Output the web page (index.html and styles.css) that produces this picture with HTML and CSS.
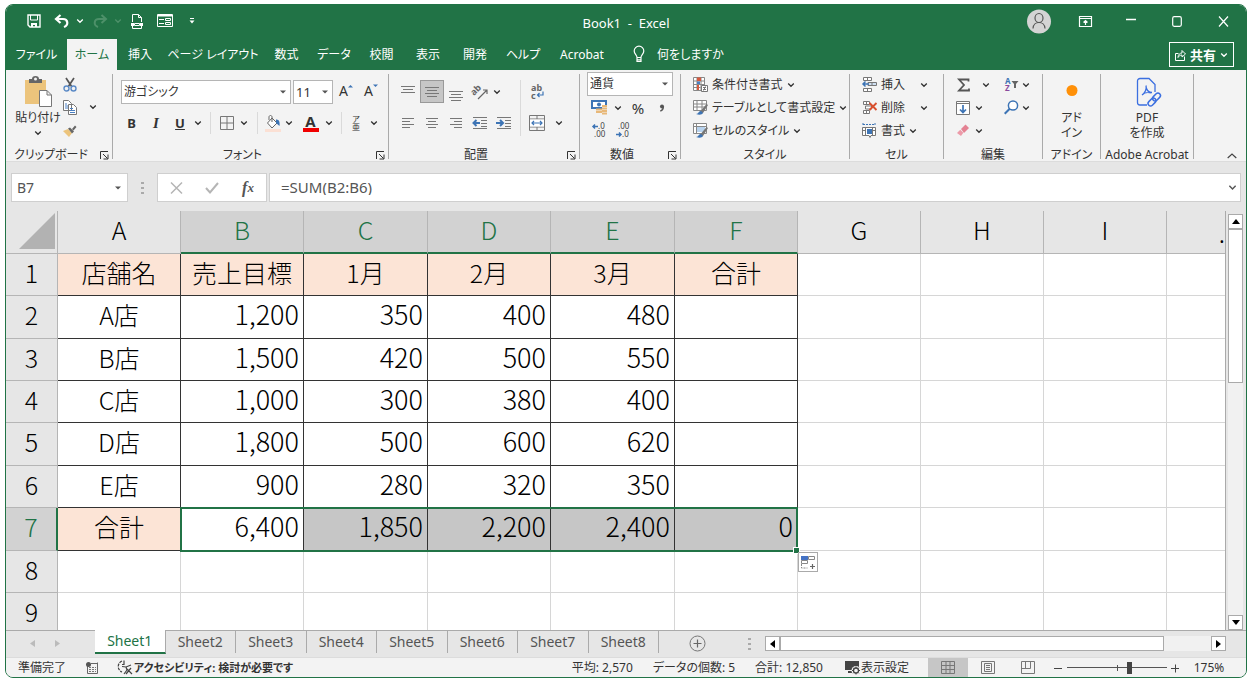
FILE: index.html
```html
<!DOCTYPE html>
<html lang="ja">
<head>
<meta charset="utf-8">
<title>Book1 - Excel</title>
<link rel="stylesheet" href="styles.css">
</head>
<body>
<svg class="defs" aria-hidden="true">
  <symbol id="chev" viewBox="0 0 8 8"><path d="M1.2 2.500 4 5.300 6.800 2.500" fill="none" stroke="currentColor" stroke-width="1.300"/></symbol>
  <symbol id="tri" viewBox="0 0 6 4"><path d="M0 .5h6L3 3.500z" fill="currentColor"/></symbol>
  <symbol id="launch" viewBox="0 0 10 10"><path d="M1.500 9V1.500H9M4 4l4.500 4.500M9 4.500V9H4.500" fill="none" stroke="currentColor"/></symbol>
</svg>
<div class="window">
  <header class="titlebar">
    <div class="quick">
      <button aria-label="保存"><svg width="14" height="14" viewBox="0 0 14 14"><path d="M1 1h12v12H3l-2-2z" fill="none" stroke="#fff" stroke-width="1.400"/><path d="M3.500 1v5h7V1" fill="none" stroke="#fff"/><path d="M4 9h6v4H8v-2H6v2H4z" fill="#fff"/></svg></button>
      <button aria-label="元に戻す"><svg width="16" height="14" viewBox="0 0 16 14"><path d="M6.500 1 2 5l4.500 4M2 5h7c5 0 6 6 1 8" fill="none" stroke="#fff" stroke-width="2.200"/></svg></button>
      <button aria-label="元に戻す一覧"><svg width="8" height="8"><use href="#chev"/></svg></button>
      <button aria-label="やり直し" class="dim"><svg width="16" height="14" viewBox="0 0 16 14"><path d="M9.500 1 14 5 9.500 9M14 5H7C2 5 1 11 6 13" fill="none" stroke="currentColor" stroke-width="2"/></svg></button>
      <button aria-label="やり直し一覧" class="dim"><svg width="8" height="8"><use href="#chev"/></svg></button>
      <button aria-label="印刷プレビュー"><svg width="12" height="15" viewBox="0 0 12 15"><path d="M1.500 8V.5h6l3 3V8M7.500.5v3h3M1.500 12v2.500h9V12" fill="none" stroke="#fff"/><path d="M0 9h3v3H0zM9 9h3v3H9z" fill="#fff"/><path d="M3.500 9.500h5v2h-5z" fill="none" stroke="#fff"/></svg></button>
      <button aria-label="フォーム"><svg width="16" height="14" viewBox="0 0 16 14"><path d="M.5.5h15v12H.5z" fill="none" stroke="#fff"/><path d="M1 1.500h14" stroke="#fff" stroke-width="2"/><path d="M2 5.500h5M2 9.500h5M8.500 4.500h5v2h-5zM8.500 8.500h5v2h-5z" fill="none" stroke="#fff"/></svg></button>
      <button aria-label="クイック アクセスのカスタマイズ"><svg width="6" height="6" viewBox="0 0 6 6"><path d="M1 .5h4" stroke="#fff"/><path d="M.5 2.500h5L3 5.500z" fill="#fff"/></svg></button>
    </div>
    <h1>Book1&nbsp; -&nbsp; Excel</h1>
    <div class="wincontrols">
      <button aria-label="アカウント"><svg width="24" height="25" viewBox="0 0 24 25"><circle cx="12" cy="12.500" r="12" fill="#d4d4d4"/><ellipse cx="12" cy="9" rx="4" ry="4.500" fill="none" stroke="#555" stroke-width="1.200"/><path d="M6 19.500c.5-8 11.500-8 12 0" fill="none" stroke="#555" stroke-width="1.200"/></svg></button>
      <button aria-label="リボンの表示オプション"><svg width="13" height="11" viewBox="0 0 13 11"><path d="M.5.5h12v10H.5zM.5 2.500h12M6.500 9V4.500M4.500 6.500l2-2 2 2" fill="none" stroke="#fff" stroke-width="1.200"/></svg></button>
      <button aria-label="最小化"><svg width="10" height="10" viewBox="0 0 10 10"><path d="M0 3.500h10" stroke="#fff" stroke-width="1.300"/></svg></button>
      <button aria-label="最大化"><svg width="10" height="11" viewBox="0 0 10 11"><rect x=".7" y=".7" width="8.600" height="9.600" rx="1.500" fill="none" stroke="#fff" stroke-width="1.200"/></svg></button>
      <button aria-label="閉じる"><svg width="11" height="11" viewBox="0 0 11 11"><path d="m1 .5 9 10M10 .5l-9 10" stroke="#fff" stroke-width="1.200"/></svg></button>
    </div>
  </header>

  <nav class="menubar">
    <div class="menus">
      <button>ファイル</button><button class="current">ホーム</button><button>挿入</button><button>ページ レイアウト</button><button>数式</button><button>データ</button><button>校閲</button><button>表示</button><button>開発</button><button>ヘルプ</button><button>Acrobat</button>
    </div>
    <button class="tellme"><svg width="12" height="17" viewBox="0 0 12 17"><path d="M4 11.500C4 9 1.200 8.300 1.200 5a4.800 4.800 0 0 1 9.600 0C10.800 8.300 8 9 8 11.500zM4 12v3.500h4V12M4 13.800h4" fill="none" stroke="#fff" stroke-width="1.200"/></svg>何をしますか</button>
    <button class="share"><svg width="11" height="12" viewBox="0 0 11 12"><path d="M3.500 4.500h-3v7h9v-4M3 8.500C3 5.500 5 4 7 4V1.500L10.500 5 7 8V6C5 6 4 7 3 8.500z" fill="none" stroke="#fff"/></svg>共有<svg width="8" height="8"><use href="#chev"/></svg></button>
  </nav>

  <section class="ribbon">
    <div class="group clipboard">
      <div class="body">
        <button class="big"><svg width="28" height="31" viewBox="0 0 28 31"><path d="M1 4h21v24H1z" fill="#ecc47c"/><path d="M5 3h3a3.500 3 0 0 1 7 0h3v4H5z" fill="#666"/><circle cx="11.500" cy="3" r="1.500" fill="#f3f3f3"/><path d="M15.500 14.500h7.500l4.500 4.500v11.500h-12zM23 14.500V19h4.500" fill="#fff" stroke="#777"/></svg><span>貼り付け</span><svg width="8" height="8"><use href="#chev"/></svg></button>
        <div class="stack">
          <button aria-label="切り取り"><svg width="14" height="15" viewBox="0 0 14 15"><path d="M3 1l6 9M11 1 5 10" stroke="#555" stroke-width="1.700"/><circle cx="3.500" cy="11.500" r="2.500" fill="none" stroke="#5b8ac6" stroke-width="1.400"/><circle cx="10.500" cy="11.500" r="2.500" fill="none" stroke="#5b8ac6" stroke-width="1.400"/></svg></button>
          <button aria-label="コピー"><svg width="14" height="15" viewBox="0 0 14 15"><path d="M.5.5h5l3 3v7h-8zM5.500 4.500h5l3 3v7h-8z" fill="#fff" stroke="#777"/><path d="M2 4h2M2 6h3M2 8h3M7 8.500h3M7 10.500h5M7 12.500h5" stroke="#4a7fc1"/></svg></button>
          <button aria-label="書式のコピー"><svg width="14" height="12" viewBox="0 0 14 12"><path d="m0 6 5-2 4 4-3 4z" fill="#ecc47c"/><path d="m5 3.500 2-1 4 4-2 2zM9 4l3-3.500L13.500 2l-3 3.500z" fill="#666"/></svg></button>
        </div>
        <button class="mid" aria-label="コピー一覧"><svg width="8" height="8"><use href="#chev"/></svg></button>
      </div>
      <footer><span>クリップボード</span><button aria-label="クリップボード設定"><svg width="10" height="10"><use href="#launch"/></svg></button></footer>
    </div>

    <div class="group font">
      <div class="body rows">
        <div class="row fontpick">
          <span class="combo"><select aria-label="フォント"><option>游ゴシック</option></select><svg width="6" height="4"><use href="#tri"/></svg></span>
          <span class="combo"><select aria-label="フォント サイズ" class="size"><option>11</option></select><svg width="6" height="4"><use href="#tri"/></svg></span>
          <button class="grow" aria-label="フォント サイズの拡大">A<svg width="5" height="4" viewBox="0 0 5 4"><path d="M0 3.500 2.500 1 5 3.500z" fill="#3d74b5"/></svg></button>
          <button class="grow" aria-label="フォント サイズの縮小">A<svg width="5" height="4" viewBox="0 0 5 4"><path d="M0 .5h5L2.500 3z" fill="#3d74b5"/></svg></button>
        </div>
        <div class="row fontstyle">
          <button class="b">B</button><button class="i">I</button><button class="u">U</button>
          <button aria-label="下線一覧"><svg width="8" height="8"><use href="#chev"/></svg></button><i class="sep"></i>
          <button aria-label="罫線"><svg width="14" height="14" viewBox="0 0 14 14"><path d="M.5.5h13v13H.5zM7 .5v13M.5 7h13" fill="none" stroke="#777"/></svg></button>
          <button aria-label="罫線一覧"><svg width="8" height="8"><use href="#chev"/></svg></button><i class="sep"></i>
          <button aria-label="塗りつぶし"><svg width="16" height="17" viewBox="0 0 16 17"><path d="m7 3 5 5-5 5-4.500-5zM7 7V2c0-2-3-2-3 0v3" fill="#fff" stroke="#666"/><path d="M11 4.500c3 0 4 2 3.500 6.500L11 8z" fill="#3d74b5"/><path d="M0 14h16v3H0z" fill="#fbe0d4"/></svg></button>
          <button aria-label="塗りつぶし一覧"><svg width="8" height="8"><use href="#chev"/></svg></button>
          <button class="fontcolor" aria-label="フォントの色">A</button>
          <button aria-label="フォントの色一覧"><svg width="8" height="8"><use href="#chev"/></svg></button><i class="sep"></i>
          <button class="ruby" aria-label="ふりがな"><span>ア</span><span>亜</span></button>
          <button aria-label="ふりがな一覧"><svg width="8" height="8"><use href="#chev"/></svg></button>
        </div>
      </div>
      <footer><span>フォント</span><button aria-label="フォント設定"><svg width="10" height="10"><use href="#launch"/></svg></button></footer>
    </div>

    <div class="group align">
      <div class="body">
        <div class="rows">
          <div class="row aligntop">
            <button aria-label="上揃え"><svg width="16" height="14" viewBox="0 0 16 14"><path d="M1 1.500h14M3 4.500h10M1 7.500h14" stroke="#777"/></svg></button>
            <button aria-label="上下中央揃え" class="on"><svg width="16" height="14" viewBox="0 0 16 14"><path d="M1 2.500h14M3 5.500h10M1 8.500h14M3 11.500h10" stroke="#777"/></svg></button>
            <button aria-label="下揃え"><svg width="16" height="14" viewBox="0 0 16 14"><path d="M1 6.500h14M3 9.500h10M1 12.500h14M3 15.500h10" stroke="#777"/></svg></button>
            <button aria-label="方向" class="orient"><svg width="16" height="14" viewBox="0 0 16 14"><text x="0" y="9" transform="rotate(-45 3 9)" class="tinyab">ab</text><path d="M5 14 14 5M10 5h4v4" fill="none" stroke="#666" stroke-width="1.200"/></svg></button>
            <button aria-label="方向一覧"><svg width="8" height="8"><use href="#chev"/></svg></button>
          </div>
          <div class="row alignbottom">
            <button aria-label="左揃え"><svg width="14" height="12" viewBox="0 0 14 12"><path d="M1 1.500h12M1 4.500h8M1 7.500h12M1 10.500h8" stroke="#777"/></svg></button>
            <button aria-label="中央揃え"><svg width="14" height="12" viewBox="0 0 14 12"><path d="M1 1.500h12M3 4.500h8M1 7.500h12M3 10.500h8" stroke="#777"/></svg></button>
            <button aria-label="右揃え"><svg width="14" height="12" viewBox="0 0 14 12"><path d="M1 1.500h12M5 4.500h8M1 7.500h12M5 10.500h8" stroke="#777"/></svg></button>
            <button aria-label="インデントを減らす"><svg width="16" height="14" viewBox="0 0 16 14"><path d="M1 1.500h14M9 4.500h6M9 7.500h6M9 10.500h6M1 12.500h14" stroke="#777"/><path d="M8 7H2M4.500 4l-3 3 3 3" fill="none" stroke="#3d74b5" stroke-width="2"/></svg></button>
            <button aria-label="インデントを増やす"><svg width="16" height="14" viewBox="0 0 16 14"><path d="M1 1.500h14M9 4.500h6M9 7.500h6M9 10.500h6M1 12.500h14" stroke="#777"/><path d="M0 7h6.500M4 4l3 3-3 3" fill="none" stroke="#3d74b5" stroke-width="2"/></svg></button>
          </div>
        </div>
        <i class="sep tall"></i>
        <div class="rows">
          <div class="row wrap"><button aria-label="折り返して全体を表示する"><svg width="16" height="16" viewBox="0 0 16 16"><text x="2" y="7" class="tinyab">ab</text><text x="2" y="15" class="tinyab">c</text><path d="M14 7.500v3.500H8.500M10.500 9l-2 2 2 2" fill="none" stroke="#3d74b5" stroke-width="1.200"/></svg></button></div>
          <div class="row wrap"><button aria-label="セルを結合して中央揃え"><svg width="16" height="16" viewBox="0 0 16 16"><path d="M.5.5h15v15H.5zM.5 4h15M.5 12h15M8 .5V4M8 12v3.500" fill="none" stroke="#777"/><path d="M1 4.500h14v7H1z" fill="#fff"/><path d="M3 8h10M5 6 3 8l2 2M11 6l2 2-2 2" fill="none" stroke="#3d74b5" stroke-width="1.200"/></svg></button><button aria-label="結合一覧"><svg width="8" height="8"><use href="#chev"/></svg></button></div>
        </div>
      </div>
      <footer><span>配置</span><button aria-label="配置設定"><svg width="10" height="10"><use href="#launch"/></svg></button></footer>
    </div>

    <div class="group number">
      <div class="body rows">
        <span class="combo"><select aria-label="表示形式"><option>通貨</option></select><svg width="6" height="4"><use href="#tri"/></svg></span>
        <div class="row money">
          <button aria-label="通貨表示形式"><svg width="17" height="16" viewBox="0 0 17 16"><path d="M1 1h14v7H1z" fill="#fff" stroke="#3d74b5" stroke-width="2"/><circle cx="8" cy="4.500" r="2" fill="#3d74b5"/><path d="M5 9h7v5H5zM11 5h5v10h-5z" fill="#f3f3f3"/><path d="M5 9.500h6M5 12h6M11 6h5M11 8.500h5M11 11h5M11 13.500h5" stroke="#e8b878" stroke-width="1.800"/></svg></button>
          <button aria-label="通貨一覧"><svg width="8" height="8"><use href="#chev"/></svg></button>
          <button class="pct">%</button><button class="comma" aria-label="桁区切りスタイル"><svg width="6" height="8" viewBox="0 0 6 8"><circle cx="3" cy="2.500" r="2" fill="#555"/><path d="M4.300 2.500c0 2.500-1 4-3 4.500" fill="none" stroke="#555" stroke-width="1.500"/></svg></button>
        </div>
        <div class="row decimals">
          <button aria-label="小数点以下の表示桁数を増やす"><svg width="14" height="15" viewBox="0 0 14 15"><text x="6" y="6" class="tiny">.0</text><text x="2" y="14" class="tiny">.00</text><path d="M6 3.500H1M3 1.500l-2 2 2 2" fill="none" stroke="#3d74b5" stroke-width="1.500"/></svg></button>
          <button aria-label="小数点以下の表示桁数を減らす"><svg width="14" height="15" viewBox="0 0 14 15"><text x="2" y="6" class="tiny">.00</text><text x="6" y="14" class="tiny">.0</text><path d="M0 11.500h5M3 9.500l2 2-2 2" fill="none" stroke="#3d74b5" stroke-width="1.500"/></svg></button>
        </div>
      </div>
      <footer><span>数値</span><button aria-label="表示形式設定"><svg width="10" height="10"><use href="#launch"/></svg></button></footer>
    </div>

    <div class="group styles">
      <div class="body stack">
        <button><svg width="15" height="15" viewBox="0 0 15 15"><path d="M.5.5h11v13H.5zM4 .5v13M8 .5v13M.5 4h11M.5 7.500h11M.5 10.500h7" fill="#fff" stroke="#888"/><path d="M4 .5h4V4H4z" fill="#d65a3f"/><path d="M4 4.500h3v2.500H4z" fill="#4a7fc1"/><path d="M4 8h2v5H4z" fill="#d65a3f"/><path d="M8.500 8.500h6v6h-6zM10 10.500h3M10 12.500h3M12.500 9.500l-2 4" fill="#fff" stroke="#777"/></svg>条件付き書式<svg width="8" height="8"><use href="#chev"/></svg></button>
        <button><svg width="15" height="15" viewBox="0 0 15 15"><path d="M.5.5h13v10H.5zM.5 4h13M.5 7h13M4 .5v10M9 .5v10" fill="#fff" stroke="#888"/><path d="M6 13 13.500 4l1.500 1-5 8z" fill="#777"/><path d="M3 14c3 0 2-3 5-3l2 2c-1 2-4 2-7 1z" fill="#3d74b5"/></svg>テーブルとして書式設定<svg width="8" height="8"><use href="#chev"/></svg></button>
        <button><svg width="15" height="15" viewBox="0 0 15 15"><path d="M.5.5h13v10H.5zM.5 3.500h13M3.500.5v10" fill="#fff" stroke="#888"/><path d="M4 4h8v5H4z" fill="#b8d3ee"/><path d="M6 13 13.500 4l1.500 1-5 8z" fill="#777"/><path d="M3 14c3 0 2-3 5-3l2 2c-1 2-4 2-7 1z" fill="#3d74b5"/></svg>セルのスタイル<svg width="8" height="8"><use href="#chev"/></svg></button>
      </div>
      <footer><span>スタイル</span></footer>
    </div>

    <div class="group cells">
      <div class="body stack">
        <button class="spread"><svg width="15" height="15" viewBox="0 0 15 15"><path d="M1.500.5h8v3h-8zM5.500.5v3M1.500 11.500h8v3h-8zM5.500 11.500v3" fill="#fff" stroke="#777"/><path d="M6 5.500h8.500v3H6zM10 5.500v3" fill="#cfe0f2" stroke="#777"/><path d="M7 7H1M3.500 4.500 1 7l2.500 2.500" fill="none" stroke="#3d74b5" stroke-width="1.500"/></svg><span>挿入</span><svg width="8" height="8"><use href="#chev"/></svg></button>
        <button class="spread"><svg width="15" height="15" viewBox="0 0 15 15"><path d="M1.500 1.500h6v3h-6zM3.500 6h6v3h-6zM1.500 10.500h6v3h-6zM4.500 10.500v3M4.500 1.500v3" fill="#fff" stroke="#777"/><path d="m7.500 3 7 7M14.500 3l-7 7" stroke="#d9502e" stroke-width="1.900"/></svg><span>削除</span><svg width="8" height="8"><use href="#chev"/></svg></button>
        <button><svg width="15" height="15" viewBox="0 0 15 15"><path d="M.5 4.500h13v8H9l-1 2-1-2H.5zM3.500 4.500v8M10.500 4.500v8M.5 7.500h3M10.500 7.500h3" fill="#fff" stroke="#777"/><path d="M5 6h5v5H5z" fill="#3d74b5"/><path d="M1 1.500h12M1 0v3M13 0v3" stroke="#3d74b5" stroke-dasharray="2 1"/></svg>書式<svg width="8" height="8"><use href="#chev"/></svg></button>
      </div>
      <footer><span>セル</span></footer>
    </div>

    <div class="group edit">
      <div class="body editgrid">
        <button aria-label="合計"><svg width="13" height="14" viewBox="0 0 13 14"><path d="M11.500 3.500V1.500H2L7 7l-5 5.500h10v-2" fill="none" stroke="#555" stroke-width="1.800"/></svg></button><button class="far" aria-label="合計一覧"><svg width="8" height="8"><use href="#chev"/></svg></button>
        <button class="right" aria-label="並べ替えとフィルター"><svg width="14" height="15" viewBox="0 0 14 15"><text x="0" y="7" class="az blue">A</text><text x="0" y="14" class="az purple">Z</text><path d="M6.500 4h7L11 7v4H9V7z" fill="#666"/></svg></button><button aria-label="並べ替え一覧"><svg width="8" height="8"><use href="#chev"/></svg></button>
        <button aria-label="フィル"><svg width="14" height="14" viewBox="0 0 14 14"><path d="M.5.5h13v13H.5z" fill="#fff" stroke="#777"/><path d="M.5 2.500h13" stroke="#777"/><path d="M7 4v7M4 8.500l3 3 3-3" fill="none" stroke="#3d74b5" stroke-width="1.700"/></svg></button><button aria-label="フィル一覧"><svg width="8" height="8"><use href="#chev"/></svg></button>
        <button class="right" aria-label="検索と選択"><svg width="15" height="15" viewBox="0 0 15 15"><circle cx="9" cy="5.500" r="4.600" fill="#fff" stroke="#3d74b5" stroke-width="1.500"/><path d="m5.700 8.800-5 5" stroke="#3d74b5" stroke-width="2"/></svg></button><button aria-label="検索一覧"><svg width="8" height="8"><use href="#chev"/></svg></button>
        <button aria-label="クリア"><svg width="14" height="13" viewBox="0 0 14 13"><path d="m5 5 4.500-4.500L13 4 8 9z" fill="#e48293"/><path d="m4.300 5.700 3 3L5 12 1 9z" fill="#ec9aa8"/></svg></button><button aria-label="クリア一覧"><svg width="8" height="8"><use href="#chev"/></svg></button>
      </div>
      <footer><span>編集</span></footer>
    </div>

    <div class="group addin">
      <div class="body"><button class="big"><svg width="28" height="31" viewBox="0 0 28 31"><circle cx="14" cy="14.500" r="5.500" fill="#ff9008"/></svg><span>アド<br>イン</span></button></div>
      <footer><span>アドイン</span></footer>
    </div>

    <div class="group acrobat">
      <div class="body"><button class="big"><svg width="28" height="31" viewBox="0 0 28 31"><path d="M14 29H7a2.500 2.500 0 0 1-2.500-2.500V5A2.500 2.500 0 0 1 7 2.500h9l6 6V16M9 19c3-2 5-6 4-9.500M13 11c1 4 3 5.500 6 5.500M9 19c2-2 6-3 9-2" fill="none" stroke="#3b6fe0" stroke-width="1.300"/><g fill="none" stroke="#3b6fe0" stroke-width="1.500"><rect x="19" y="18.500" width="9" height="5" rx="2.500" transform="rotate(-45 23.500 21)"/><rect x="14.500" y="23.500" width="9" height="5" rx="2.500" transform="rotate(-45 19 26)"/></g></svg><span>PDF<br>を作成</span></button></div>
      <footer><span>Adobe Acrobat</span></footer>
    </div>
    <button class="collapse" aria-label="リボンを折りたたむ"><svg width="10" height="6" viewBox="0 0 10 6"><path d="m.7 5 4.300-4 4.300 4" fill="none" stroke="#444" stroke-width="1.200"/></svg></button>
  </section>

  <section class="formulabar">
    <span class="combo namebox"><input aria-label="名前ボックス" value="B7"><svg width="6" height="4"><use href="#tri"/></svg></span>
    <i class="dots"></i>
    <div class="fxbuttons">
      <button aria-label="キャンセル"><svg width="13" height="12" viewBox="0 0 13 12"><path d="m1 .5 11 11M12 .5l-11 11" stroke="#b5b5b5" stroke-width="1.500"/></svg></button>
      <button aria-label="入力"><svg width="14" height="12" viewBox="0 0 14 12"><path d="m1 6 4 4.500L13 1" fill="none" stroke="#b5b5b5" stroke-width="2"/></svg></button>
      <button class="fx" aria-label="関数の挿入">f<small>x</small></button>
    </div>
    <div class="formula"><input aria-label="数式バー" value="=SUM(B2:B6)"><svg width="9" height="9"><use href="#chev"/></svg></div>
  </section>

  <main class="sheetarea">
    <div class="sheet">
      <table>
        <colgroup><col class="rh"><col class="w"><col class="w"><col class="wx"><col class="w"><col class="wx"><col class="w"><col class="w"><col class="w"><col class="w"><col class="rest"></colgroup>
        <thead><tr><th class="corner"><svg width="36" height="36" viewBox="0 0 36 36"><path d="M36 0v36H0z" fill="#b2b2b2"/></svg></th><th>A</th><th class="sel">B</th><th class="sel">C</th><th class="sel">D</th><th class="sel">E</th><th class="sel">F</th><th>G</th><th>H</th><th>I</th><th class="cut">.</th></tr></thead>
        <tbody>
          <tr class="head"><th>1</th><td>店舗名</td><td>売上目標</td><td>1月</td><td>2月</td><td>3月</td><td>合計</td><td></td><td></td><td></td><td></td></tr>
          <tr class="data tall"><th>2</th><td>A店</td><td>1,200</td><td>350</td><td>400</td><td>480</td><td></td><td></td><td></td><td></td><td></td></tr>
          <tr class="data"><th>3</th><td>B店</td><td>1,500</td><td>420</td><td>500</td><td>550</td><td></td><td></td><td></td><td></td><td></td></tr>
          <tr class="data"><th>4</th><td>C店</td><td>1,000</td><td>300</td><td>380</td><td>400</td><td></td><td></td><td></td><td></td><td></td></tr>
          <tr class="data tall"><th>5</th><td>D店</td><td>1,800</td><td>500</td><td>600</td><td>620</td><td></td><td></td><td></td><td></td><td></td></tr>
          <tr class="data"><th>6</th><td>E店</td><td>900</td><td>280</td><td>320</td><td>350</td><td></td><td></td><td></td><td></td><td></td></tr>
          <tr class="data total tall"><th>7</th><td>合計</td><td>6,400</td><td>1,850</td><td>2,200</td><td>2,400</td><td>0</td><td></td><td></td><td></td><td></td></tr>
          <tr><th>8</th><td></td><td></td><td></td><td></td><td></td><td></td><td></td><td></td><td></td><td></td></tr>
          <tr><th>9</th><td></td><td></td><td></td><td></td><td></td><td></td><td></td><td></td><td></td><td></td></tr>
        </tbody>
      </table>
      <div class="selection"><i></i></div>
      <button class="smarttag" aria-label="オートフィル オプション"><svg width="15" height="15" viewBox="0 0 15 15"><path d="M7.500 1.500h6v3h-6zM.5 5.500h6v3h-6z" fill="#fff" stroke="#888"/><path d="M0 1h7v4H0z" fill="#4472c4"/><path d="M.5 9v4h6" fill="none" stroke="#888" stroke-dasharray="2 1"/><path d="M11.500 9v5M9 11.500h5" stroke="#666" stroke-width="1.200"/></svg></button>
    </div>
    <div class="vscroll">
      <button aria-label="上へスクロール"><svg width="8" height="5" viewBox="0 0 8 5"><path d="M0 5 4 0l4 5z"/></svg></button>
      <div class="track"><div class="thumb"></div></div>
      <button aria-label="下へスクロール"><svg width="8" height="5" viewBox="0 0 8 5"><path d="M0 0h8L4 5z"/></svg></button>
    </div>
  </main>

  <section class="sheetbar">
    <div class="sheetnav"><button aria-label="前のシート"><svg width="5" height="7" viewBox="0 0 5 7"><path d="M5 0v7L0 3.500z" fill="#bbb"/></svg></button><button aria-label="次のシート"><svg width="5" height="7" viewBox="0 0 5 7"><path d="M0 0v7l5-3.500z" fill="#bbb"/></svg></button></div>
    <div class="sheettabs"><button class="active">Sheet1</button><button>Sheet2</button><button>Sheet3</button><button>Sheet4</button><button>Sheet5</button><button>Sheet6</button><button>Sheet7</button><button>Sheet8</button></div>
    <button class="add" aria-label="新しいシート"><svg width="17" height="17" viewBox="0 0 17 17"><path d="M8.500 4.500v8M4.500 8.500h8" stroke="#666" stroke-width="1.200"/><circle cx="8.500" cy="8.500" r="7.500" fill="none" stroke="#777"/></svg></button>
    <i class="dots"></i>
    <div class="hscroll">
      <button aria-label="左へスクロール"><svg width="5" height="8" viewBox="0 0 5 8"><path d="M5 0v8L0 4z"/></svg></button>
      <div class="track"><div class="thumb"></div></div>
      <button aria-label="右へスクロール"><svg width="5" height="8" viewBox="0 0 5 8"><path d="M0 0v8l5-4z"/></svg></button>
    </div>
  </section>

  <footer class="status">
    <span class="ready">準備完了</span>
    <svg class="macro" width="13" height="12" viewBox="0 0 13 12"><path d="M1.500 3.500v8h10V.5M5 1.500h7" fill="none" stroke="#666"/><path d="M3 5.500h7M3 7.500h7M3 9.500h7" stroke="#777" stroke-dasharray="2 1"/><circle cx="2.500" cy="2.500" r="2.500" fill="#555"/></svg>
    <button class="access"><svg width="17" height="15" viewBox="0 0 17 15"><path d="M5 1C0 3 0 10 5 12" fill="none" stroke="#444" stroke-width="1.200" stroke-dasharray="3 1"/><path d="M7 .5v4H5M5 6.500l4 .5 5-2M9 7l1 3-3 4M10 9l5 5M14 8l-5 6" fill="none" stroke="#444" stroke-width="1.200"/></svg>アクセシビリティ: 検討が必要です</button>
    <div class="stats"><span>平均: 2,570</span><span>データの個数: 5</span><span>合計: 12,850</span></div>
    <button class="display"><svg width="16" height="14" viewBox="0 0 16 14"><path d="M0 0h14v9H0zM3 10h5v2H3z" fill="#444"/><circle cx="11" cy="9.500" r="4.500" fill="#f3f3f3"/><circle cx="11" cy="9.500" r="2.500" fill="none" stroke="#444" stroke-width="1.300"/><path d="M11 5.500V7M11 12v1.500M7 9.500h1.500M13.500 9.500H15M8.200 6.700l1 1M13.800 6.700l-1 1M8.200 12.300l1-1M13.800 12.300l-1-1" stroke="#444"/></svg>表示設定</button>
    <div class="views">
      <button class="on" aria-label="標準"><svg width="14" height="13" viewBox="0 0 14 13"><path d="M.5.5h13v12H.5zM5 .5v12M9 .5v12M.5 4.500h13M.5 8.500h13" fill="none" stroke="#777"/></svg></button>
      <button aria-label="ページ レイアウト"><svg width="14" height="13" viewBox="0 0 14 13"><path d="M.5.5h13v12H.5zM3.500 2.500h7v8h-7zM5 4.500h4M5 6.500h4M5 8.500h4" fill="none" stroke="#777"/></svg></button>
      <button aria-label="改ページ プレビュー"><svg width="14" height="13" viewBox="0 0 14 13"><path d="M.5.5h13v12H.5zM4.500.5v7M9.500.5v7M.5 7.500h9" fill="none" stroke="#777"/></svg></button>
    </div>
    <div class="zoom">
      <button aria-label="縮小"><svg width="8" height="8" viewBox="0 0 8 8"><path d="M0 4.500h8" stroke="#444"/></svg></button>
      <input type="range" aria-label="ズーム" min="0" max="100" value="63">
      <button aria-label="拡大"><svg width="8" height="8" viewBox="0 0 8 8"><path d="M0 4.500h8M4.500.5v8" stroke="#444"/></svg></button>
      <button class="level">175%</button>
    </div>
  </footer>
</div>
</body>
</html>
```
FILE: styles.css
```css
* { box-sizing: border-box; }
html, body { height: 100%; margin: 0; }
body {
  padding: 4px 6px 7px 5px;
  background: #fff;
  color: #333;
  font: 12px/16px "Noto Sans", "Noto Sans CJK JP", sans-serif;
  font-feature-settings: "palt";
}
.defs { display: none; }
button {
  display: flex; align-items: center; justify-content: center;
  margin: 0; padding: 0; border: 0; background: none;
  color: inherit; font: inherit; font-feature-settings: inherit; white-space: nowrap;
}
input, select { font: inherit; color: inherit; min-width: 0; }
svg { display: block; flex: none; overflow: visible; }
.window {
  display: flex; flex-direction: column; height: 100%;
  border: 1px solid #217346; border-radius: 8px; overflow: hidden;
  background: #e6e6e6;
}

/* title bar */
.titlebar { display: grid; grid-template-columns: 1fr auto 1fr; align-items: center; height: 34px; background: #217346; color: #fff; flex: none; }
.titlebar h1 { margin: 2px 0 0; font-size: 13px; font-weight: 400; }
.quick { display: grid; grid-template-columns: 28px 28px 8px 32px 4px 34px 22px 32px; margin-left: 14px; height: 26px; align-self: start; margin-top: 3px; }
.quick .dim { color: #4d9069; }
.wincontrols { display: grid; grid-template-columns: repeat(5, 46px); justify-content: end; height: 34px; padding-bottom: 2px; }

/* menu row */
.menubar { display: flex; height: 31px; background: #217346; color: #fff; flex: none; }
.menus { display: grid; grid-template-columns: 61px 50px 46px 100px 47px 48px 47px 46px 48px 48px 70px; }
.menus .current { background: #f3f3f3; color: #217346; }
.tellme { gap: 12px; margin-left: 16px; }
.share { align-self: flex-start; margin: 3px 12px 0 auto; width: 65px; height: 25px; gap: 4px; border: 1px solid #fff; font-weight: 700; font-size: 13px; }

/* ribbon */
.ribbon { display: flex; height: 92px; padding: 4px 0 2px; background: #f3f3f3; border-bottom: 1px solid #dcdcdc; flex: none; }
.group { display: flex; flex-direction: column; flex: none; border-right: 1px solid #aaa; }
.group .body { display: flex; flex: 1; }
.group footer { display: flex; height: 14px; padding-top: 5px; align-items: center; white-space: nowrap; }
.group footer span { flex: 1; text-align: center; }
.group footer button { width: 16px; height: 9px; }
.group .rows { display: flex; flex-direction: column; }
.row { display: grid; }
.stack, .group .body.stack { display: flex; flex-direction: column; margin-top: -1px; }
.stack button { height: 23px; gap: 4px; justify-content: flex-start; }
.big { flex-direction: column; justify-content: flex-start; padding-top: 2px; }
.big span { line-height: 15px; margin-top: 3px; text-align: center; }
.combo { display: grid; align-items: center; background: #fff; border: 1px solid #b5b5b5; }
.combo > * { grid-area: 1 / 1; }
.combo > svg { justify-self: end; margin-right: 4px; color: #555; pointer-events: none; }
.combo select, .combo input { width: 100%; height: 100%; padding: 0 2px; border: 0; background: none; appearance: none; outline: 0; }
.sep { width: 1px; height: 22px; background: #dadada; justify-self: center; align-self: center; }
.sep.tall { height: 56px; margin: 6px 4px 0; align-self: flex-start; }

.clipboard { width: 107px; }
.clipboard .big { width: 44px; margin-left: 10px; }
.clipboard .big > svg:last-child { margin-top: 4px; }
.clipboard .stack { width: 24px; padding-left: 3px; }
.clipboard .mid { width: 18px; height: 66px; }

.font { width: 276px; }
.font .body { padding: 6px 0 0 8px; gap: 6px; }
.fontpick { grid-template-columns: 170px 40px 22px 24px; column-gap: 2px; height: 24px; }
.combo .size { font-size: 13px; }
.grow { align-items: flex-start; font-size: 14px; line-height: 22px; }
.grow svg { margin-top: 4px; }
.fontstyle { grid-template-columns: 21px 28px 20px 16px 9px 23px 12px 15px 15px 18px 25px 11px 15px 14px 22px; height: 26px; align-items: center; }
.b, .u { font-weight: 700; font-size: 13px; }
.i { font: italic 700 15px/16px "Liberation Serif", serif; }
.u { text-decoration: underline; }
.fontcolor { justify-self: center; width: 16px; height: 17px; border-bottom: 4px solid #f00000; font-size: 15px; font-weight: 700; }
.ruby { flex-direction: column; font-size: 8px; line-height: 8px; }

.align { width: 191px; }
.align .body > .rows { padding-top: 6px; gap: 8px; }
.aligntop { grid-template-columns: 24px 24px 24px 25px 8px; height: 23px; padding-left: 7px; }
.aligntop .on { background: #c6c6c6; border: 1px solid #999; }
.alignbottom { grid-template-columns: repeat(5, 24px); height: 23px; padding-left: 7px; }
.wrap { grid-template-columns: 24px 20px; height: 23px; }
.tinyab { font: 700 9px "Noto Sans", sans-serif; fill: #666; }
.tiny { font: 8px "Noto Sans", sans-serif; fill: #444; }

.number { width: 101px; }
.number .body { padding-left: 7px; margin-top: -2px; }
.number .combo { height: 24px; width: 86px; }
.money { grid-template-columns: 24px 14px 26px 22px; height: 23px; }
.pct { font-size: 15px; }
.decimals { grid-template-columns: 24px 24px; height: 23px; }

.styles { width: 169px; }
.styles .body { padding-left: 12px; }
.cells { width: 94px; }
.cells .body { padding-left: 12px; }
.spread span { width: 35px; text-align: left; }
.edit { width: 99px; }
.group .editgrid { display: grid; grid-template-columns: 18px 14px 33px 14px; grid-template-rows: repeat(3, 23px); padding-left: 10px; margin-top: -1px; }
.editgrid .far { margin-right: -14px; }
.editgrid .right { justify-self: end; }
.az { font: 700 8px "Noto Sans", sans-serif; }
.blue { fill: #3d74b5; }
.purple { fill: #8a4a9e; }
.addin { width: 58px; }
.addin .body, .acrobat .body { justify-content: center; }
.acrobat { width: 93px; }
.collapse { margin: 0 9px 0 auto; align-self: flex-end; height: 6px; }

/* formula bar */
.formulabar { display: flex; height: 49px; padding: 11px 5px 9px; flex: none; align-items: stretch; color: #555; }
.formulabar > * { height: 29px; }
.namebox { width: 117px; border-color: #cfcfcf; }
.namebox input { padding-left: 5px; font-size: 14px; }
.namebox > svg { margin-right: 6px; }
.dots { width: 3px; height: 12px; align-self: center; background: repeating-linear-gradient(#aaa 0 2px, transparent 2px 5px); }
.formulabar .dots { margin: 0 13px; height: 12px; }
.fxbuttons { display: grid; grid-template-columns: repeat(3, 36px); width: 110px; background: #fff; border: 1px solid #cfcfcf; }
.fx { font: italic 700 16px/20px "Liberation Serif", serif; }
.fx small { font-size: 13px; }
.formula { display: flex; flex: 1; align-items: center; margin-left: 2px; padding-right: 3px; background: #fff; border: 1px solid #cfcfcf; }
.formula input { flex: 1; border: 0; background: none; outline: 0; padding: 0 0 2px 11px; font-size: 15px; }

/* sheet */
.sheetarea { display: flex; flex: 1; min-height: 0; }
.sheet { position: relative; flex: 1; min-width: 0; overflow: hidden; border-right: 1px solid #aaa; }
table { width: 100%; table-layout: fixed; border-collapse: separate; border-spacing: 0; font: 300 25px/34px "Noto Sans CJK JP", sans-serif; font-feature-settings: normal; color: #000; }
.rh { width: 52px; } .w { width: 123px; } .wx { width: 124px; }
tr { height: 42px; }
thead tr, tr.tall { height: 43px; }
th, td { padding: 0 4px 6px; border-right: 1px solid #d6d6d6; border-bottom: 1px solid #d6d6d6; font-weight: 300; white-space: nowrap; overflow: hidden; }
th { background: #e6e6e6; border-color: #b5b5b5; text-align: center; }
th.sel, .total th { background: #d2d2d2; color: #217346; }
th.sel { border-bottom: 2px solid #217346; padding-bottom: 5px; }
.corner { padding: 0 2px 2px 13px; }
.cut { text-align: right; padding: 0; }
td { background: #fff; text-align: right; }
td:last-child, th:last-child { border-right: 0; }
.head td { text-align: center; }
.head td:nth-child(-n+7) { background: #fce4d6; }
.head td:nth-child(-n+7), .data td:nth-child(-n+7) { border-color: #333; }
.data td:nth-child(n+3) { font-size: 27px; }
.data td:nth-child(2) { text-align: center; }
.total td:nth-child(2) { background: #fce4d6; }
.total td:nth-child(n+4):nth-child(-n+7) { background: #c6c6c6; }
.total th { border-right: 2px solid #217346; }
.selection { position: absolute; left: 174px; top: 296px; width: 618px; height: 45px; border: 2px solid #217346; }
.selection i { position: absolute; right: -3px; bottom: -3px; width: 5px; height: 5px; background: #217346; outline: 1px solid #fff; }
.smarttag { position: absolute; left: 792px; top: 341px; width: 20px; height: 20px; background: #fff; border: 1px solid #aaa; }
.vscroll { display: flex; flex-direction: column; width: 20px; padding: 3px 3px 0 2px; }
.vscroll button, .hscroll button { width: 15px; height: 15px; background: #fff; border: 1px solid #aaa; flex: none; }
.vscroll .track { flex: 1; background: #f1f1f1; }
.vscroll .thumb { height: 40%; background: #fff; border: 1px solid #aaa; }

/* sheet tabs */
.sheetbar { display: flex; align-items: flex-start; height: 27px; border-top: 1px solid #aaa; flex: none; color: #555; }
.sheetnav { display: grid; grid-template-columns: 25px 25px; width: 89px; height: 24px; padding-left: 14px; }
.sheettabs { display: grid; grid-template-columns: repeat(8, 1fr); width: 564px; font-size: 14px; line-height: 20px; }
.sheettabs button { height: 22px; border-right: 1px solid #aaa; }
.sheettabs .active { margin-top: -1px; height: 24px; background: #fff; color: #217346; border-bottom: 2px solid #217346; }
.add { margin: 4px 0 0 30px; }
.sheetbar .dots { margin: 7px 14px 0 42px; align-self: flex-start; }
.hscroll { display: flex; flex: 1; margin: 5px 20px 0 0; }
.hscroll .track { flex: 1; background: #f1f1f1; }
.hscroll .thumb { width: 89%; height: 15px; background: #fff; border: 1px solid #aaa; }

/* status bar */
.status { display: flex; align-items: center; height: 20px; background: #f3f3f3; border-top: 1px solid #dcdcdc; flex: none; white-space: nowrap; }
.ready { margin-left: 12px; width: 68px; }
.macro { margin-right: 18px; }
.access { font-weight: 700; font-size: 11px; }
.stats { display: flex; gap: 20px; margin-left: auto; }
.display { margin-left: 22px; }
.views { display: grid; grid-template-columns: repeat(3, 40px); height: 20px; margin-left: 19px; }
.views .on { background: #c6c6c6; }
.zoom { display: flex; align-items: center; margin-left: 6px; }
.zoom input { appearance: none; width: 100px; height: 12px; margin: 0 4px 0 5px; background: linear-gradient(#555, #555) center / 1px 6px no-repeat, linear-gradient(#555, #555) center / 100% 1px no-repeat; }
.zoom input::-webkit-slider-thumb { appearance: none; width: 5px; height: 12px; background: #444; }
.level { width: 52px; padding-left: 8px; margin-right: 15px; }
```
